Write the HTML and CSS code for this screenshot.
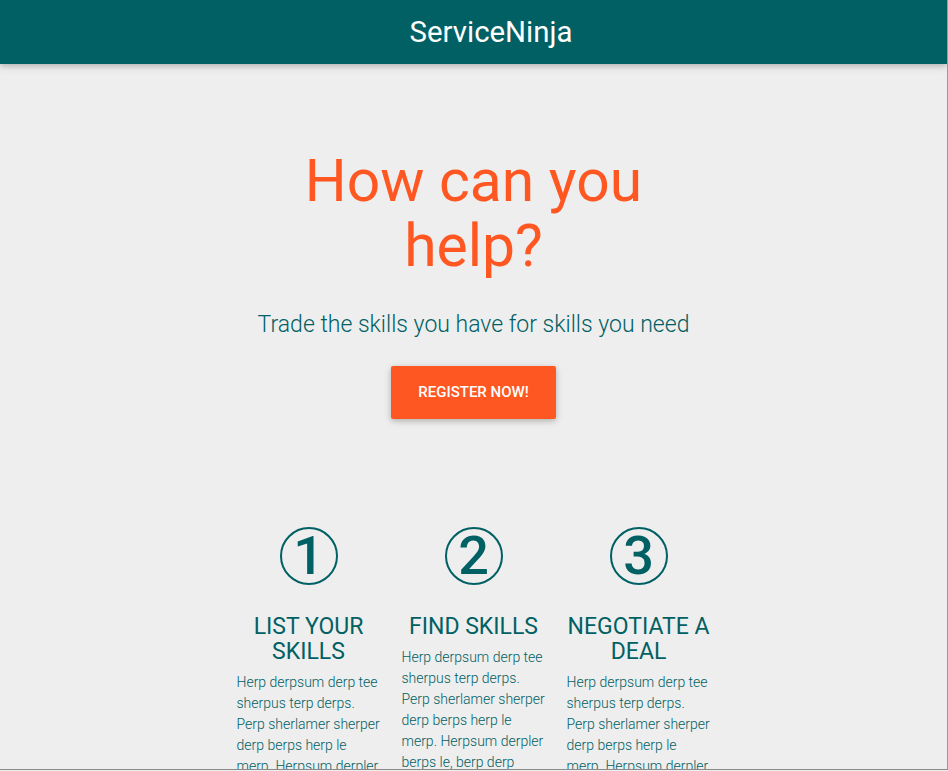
FILE: index.html
```html
<!DOCTYPE html>
<html lang="en">
<head>
<meta charset="utf-8">
<title>ServiceNinja</title>
<link rel="stylesheet" href="styles.css">
</head>
<body>
<div class="frame">
  <header class="nav">
    <div class="brand">ServiceNinja</div>
  </header>
  <main class="container">
    <section class="hero">
      <h1 class="headline">How can you help?</h1>
      <h5 class="tagline">Trade the skills you have for skills you need</h5>
      <a class="btn" href="#">Register Now!</a>
    </section>
    <section class="steps">
      <div class="step">
        <div class="num"><span>1</span></div>
        <h5 class="step-title">List your skills</h5>
        <p class="step-text">Herp derpsum derp tee sherpus terp derps. Perp sherlamer sherper derp berps herp le merp. Herpsum derpler berps le, berp derp</p>
      </div>
      <div class="step">
        <div class="num"><span>2</span></div>
        <h5 class="step-title">Find skills</h5>
        <p class="step-text">Herp derpsum derp tee sherpus terp derps. Perp sherlamer sherper derp berps herp le merp. Herpsum derpler berps le, berp derp</p>
      </div>
      <div class="step">
        <div class="num"><span>3</span></div>
        <h5 class="step-title">Negotiate a deal</h5>
        <p class="step-text">Herp derpsum derp tee sherpus terp derps. Perp sherlamer sherper derp berps herp le merp. Herpsum derpler berps le, berp derp</p>
      </div>
    </section>
  </main>
</div>
</body>
</html>
```
FILE: styles.css
```css
html, body {
  margin: 0;
  padding: 0;
  background: #eeeeee;
}
body {
  font-family: Roboto, "Liberation Sans", sans-serif;
  color: #006064;
}
.frame {
  width: 947px;
  height: 769px;
  overflow: hidden;
  border-right: 1px solid #9a9a9a;
  border-bottom: 1px solid #8a8a8a;
  background: #eeeeee;
}
.nav {
  height: 64px;
  background: #006064;
  box-shadow: 0 2px 5px 0 rgba(0,0,0,0.16), 0 2px 10px 0 rgba(0,0,0,0.12);
  display: flex;
  align-items: center;
  justify-content: center;
  padding-left: 35px;
  position: relative;
}
.brand {
  color: #ffffff;
  font-size: 29.4px;
  font-weight: 400;
  line-height: 64px;
}
.container {
  width: 495px;
  margin: 0 auto;
}
.hero {
  display: flex;
  flex-direction: column;
  align-items: center;
  text-align: center;
}
.headline {
  margin: 85px 0 0;
  padding: 0 70px;
  color: #ff5722;
  font-size: 58.8px;
  font-weight: 400;
  line-height: 64.7px;
}
.tagline {
  margin: 34px 0 0;
  font-size: 23px;
  font-weight: 300;
  line-height: 25.3px;
  color: #006064;
}
.btn {
  margin-top: 28px;
  display: inline-block;
  height: 53px;
  line-height: 53px;
  padding: 0 27px;
  background: #ff5722;
  color: #ffffff;
  text-decoration: none;
  text-transform: uppercase;
  font-size: 15px;
  font-weight: 500;
  border-radius: 2px;
  box-shadow: 0 2px 5px 0 rgba(0,0,0,0.16), 0 2px 10px 0 rgba(0,0,0,0.12);
}
.steps {
  margin-top: 108px;
  display: grid;
  grid-template-columns: repeat(3, 1fr);
}
.step {
  padding: 0 10.5px;
  display: flex;
  flex-direction: column;
  align-items: center;
}
.num {
  width: 58px;
  height: 58px;
  box-sizing: border-box;
  border: 2px solid #006064;
  border-radius: 50%;
  display: flex;
  align-items: center;
  justify-content: center;
}
.num span {
  font-family: Roboto, "Liberation Sans", sans-serif;
  font-size: 54px;
  font-weight: 500;
  line-height: 1;
  color: #006064;
  margin-top: 1px;
}
.step-title {
  margin: 29px 0 0;
  text-align: center;
  text-transform: uppercase;
  font-size: 23px;
  font-weight: 400;
  line-height: 25.3px;
  color: #006064;
}
.step-text {
  margin: 8px 0 0;
  align-self: stretch;
  font-size: 14px;
  font-weight: 300;
  line-height: 21px;
  color: #006064;
}
```
